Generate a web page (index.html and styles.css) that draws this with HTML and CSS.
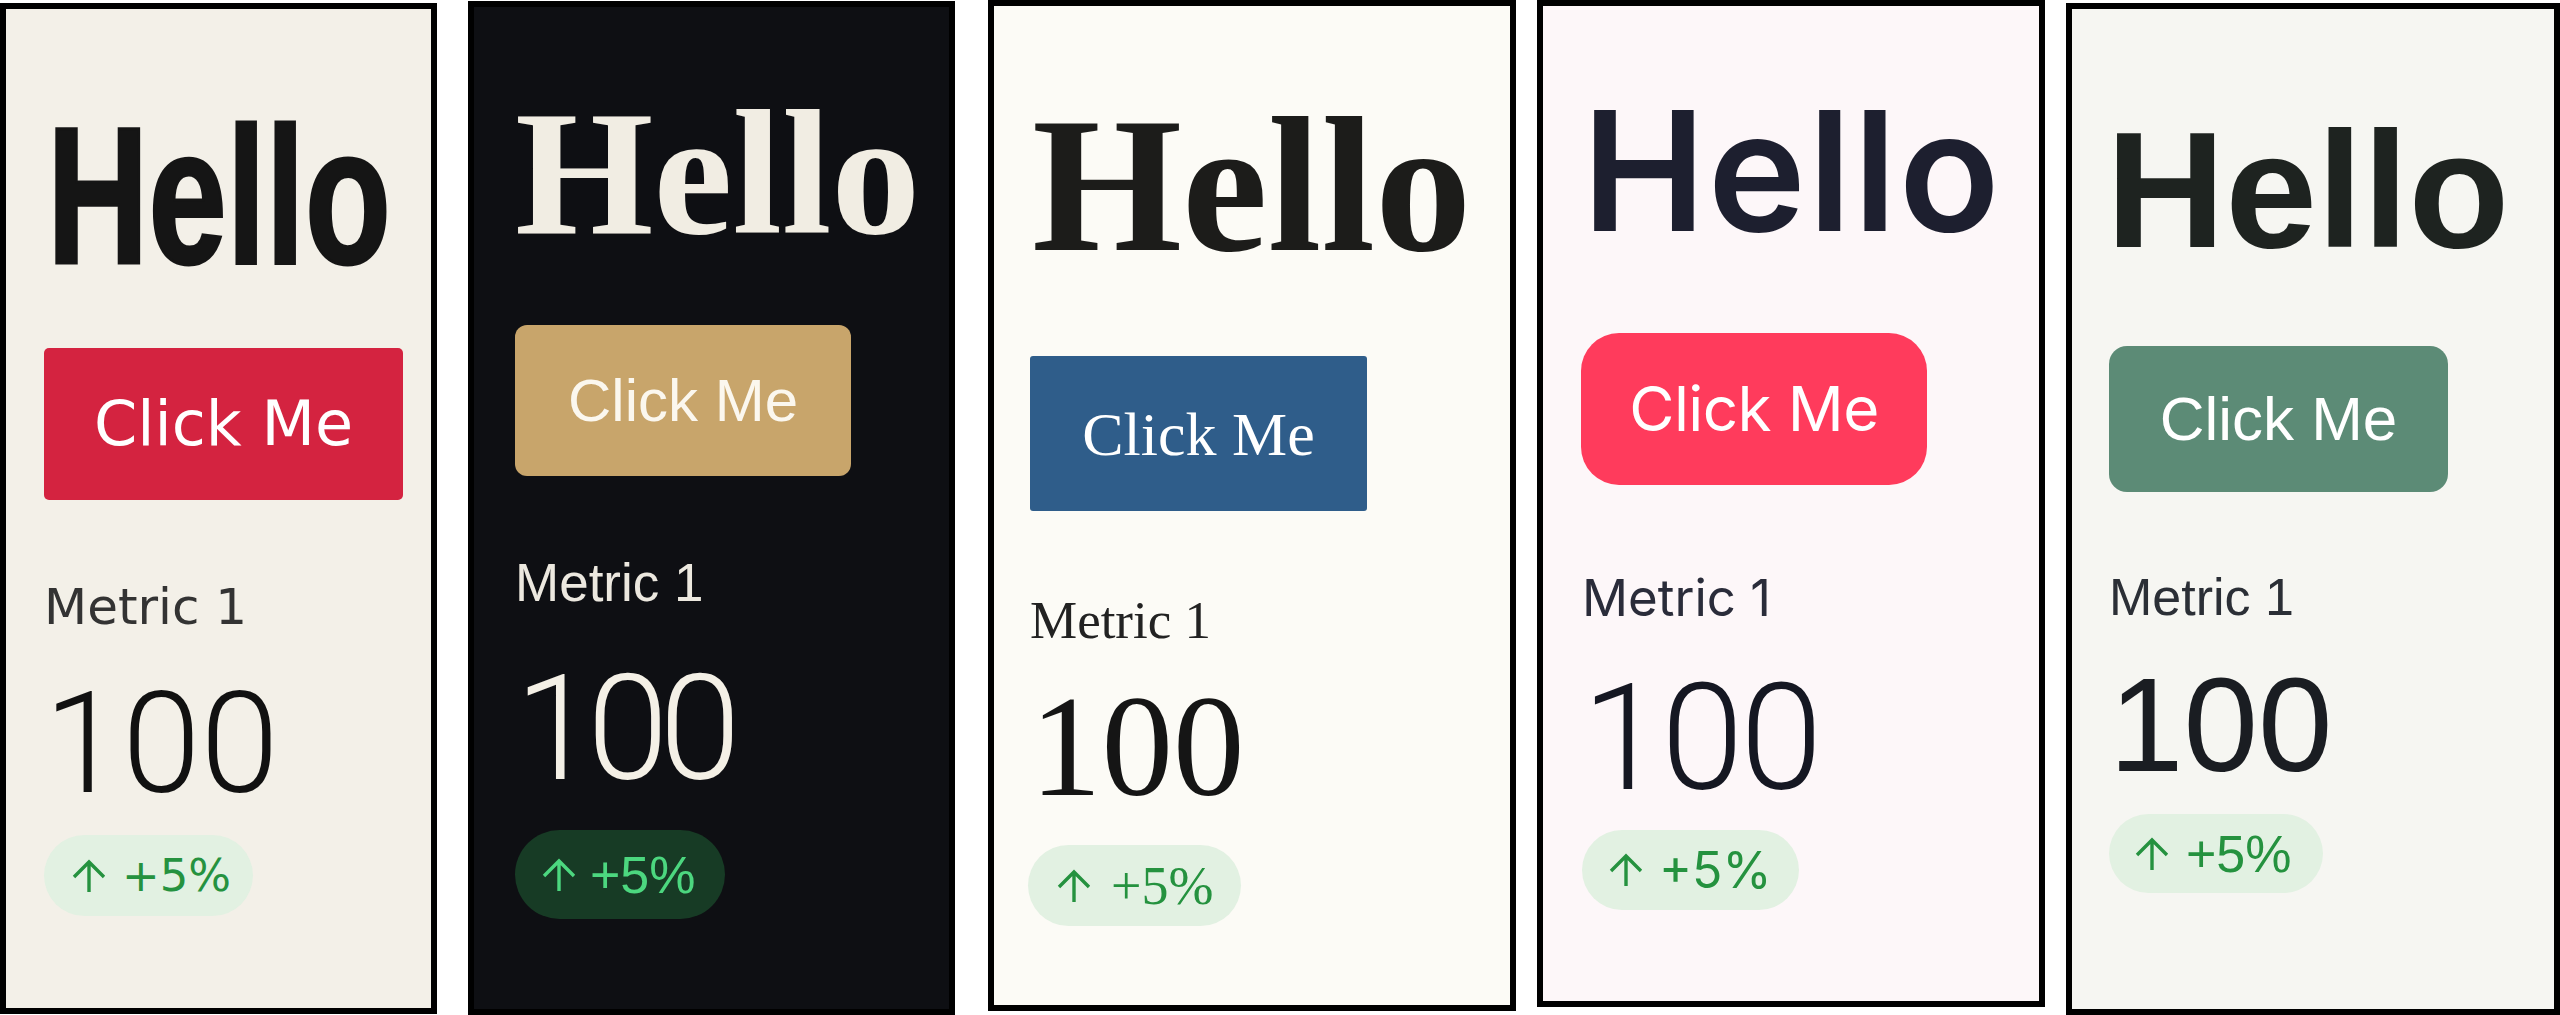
FILE: index.html
```html
<!DOCTYPE html>
<html lang="en">
<head>
<meta charset="utf-8">
<title>Theme previews</title>
<link rel="stylesheet" href="styles.css">
</head>
<body>
<div class="board">
  <section class="card c1">
    <h1 class="title">Hello</h1>
    <button class="btn">Click Me</button>
    <p class="label">Metric 1</p>
    <p class="value">100</p>
    <span class="badge"><svg class="arrow" viewBox="0 0 34 34"><path d="M17 33V3M2 18L17 3L32 18"/></svg><span>+5%</span></span>
  </section>
  <section class="card c2">
    <h1 class="title">Hello</h1>
    <button class="btn">Click Me</button>
    <p class="label">Metric 1</p>
    <p class="value">100</p>
    <span class="badge"><svg class="arrow" viewBox="0 0 34 34"><path d="M17 33V3M2 18L17 3L32 18"/></svg><span>+5%</span></span>
  </section>
  <section class="card c3">
    <h1 class="title">Hello</h1>
    <button class="btn">Click Me</button>
    <p class="label">Metric 1</p>
    <p class="value">100</p>
    <span class="badge"><svg class="arrow" viewBox="0 0 34 34"><path d="M17 33V3M2 18L17 3L32 18"/></svg><span>+5%</span></span>
  </section>
  <section class="card c4">
    <h1 class="title">Hello</h1>
    <button class="btn">Click Me</button>
    <p class="label">Metric 1</p>
    <p class="value">100</p>
    <span class="badge"><svg class="arrow" viewBox="0 0 34 34"><path d="M17 33V3M2 18L17 3L32 18"/></svg><span>+5%</span></span>
  </section>
  <section class="card c5">
    <h1 class="title">Hello</h1>
    <button class="btn">Click Me</button>
    <p class="label">Metric 1</p>
    <p class="value">100</p>
    <span class="badge"><svg class="arrow" viewBox="0 0 34 34"><path d="M17 33V3M2 18L17 3L32 18"/></svg><span>+5%</span></span>
  </section>
</div>
</body>
</html>
```

FILE: styles.css
```css
* { box-sizing: border-box; }
html, body { margin: 0; padding: 0; background: #ffffff; }
body { width: 2560px; height: 1015px; overflow: hidden; font-family: "Liberation Sans", Arial, sans-serif; }

.board { display: flex; align-items: flex-start; height: 1015px; }

.card {
  display: flex;
  flex-direction: column;
  align-items: flex-start;
  border: 6px solid #000;
  overflow: hidden;
  flex: none;
}

.title, .label, .value { margin: 0; line-height: 1; white-space: nowrap; font-weight: 400; }
.title { font-weight: 700; }

.btn {
  display: flex;
  align-items: center;
  justify-content: center;
  border: none;
  padding: 0;
  color: #fff;
  line-height: 1;
  white-space: nowrap;
  flex: none;
}

.badge {
  display: flex;
  align-items: center;
  border-radius: 999px;
  background: #e2f1e2;
  color: #25923f;
  line-height: 1;
  white-space: nowrap;
  flex: none;
}

.arrow { width: 34px; height: 34px; flex: none; }
.arrow path { fill: none; stroke: currentColor; stroke-width: 3.4; }

/* Card 1 */
.c1 { width: 437px; height: 1011px; margin-top: 3px; padding-left: 38px; background: #f3f0e8; }
.c1 .title { font-family: "Liberation Sans", Arial, sans-serif; font-size: 194px; color: #151515; -webkit-text-stroke: 3px #151515; transform: scaleX(0.725); transform-origin: left top; margin-top: 90px; margin-left: 3px; }
.c1 .btn { width: 359px; height: 152px; margin-top: 55px; background: #d42340; border-radius: 5px; font-family: "DejaVu Sans", sans-serif; font-size: 62px; }
.c1 .label { font-family: "DejaVu Sans", sans-serif; font-size: 50px; color: #333333; margin-top: 82px; }
.c1 .value { font-family: Roboto, sans-serif; font-weight: 300; font-size: 141px; color: #111111; margin-top: 41px; }
.c1 .badge { width: 209px; height: 81px; margin-top: 21px; padding-left: 28px; gap: 16px; font-family: "DejaVu Sans", sans-serif; font-size: 45px; }

/* Card 2 */
.c2 { width: 487px; height: 1014px; margin-top: 1px; margin-left: 31px; padding-left: 41px; background: #0e0f13; }
.c2 .title { font-family: "Liberation Serif", serif; font-size: 178px; color: #f1ede3; margin-top: 77px; }
.c2 .btn { width: 336px; height: 151px; margin-top: 63px; background: #c8a56b; border-radius: 12px; font-family: "Liberation Sans", Arial, sans-serif; font-size: 60px; color: #fbf7ee; }
.c2 .label { font-family: "Liberation Sans", Arial, sans-serif; font-size: 53px; color: #ece8df; margin-top: 80px; }
.c2 .value { font-family: Roboto, sans-serif; font-weight: 300; font-size: 146px; letter-spacing: -0.06em; color: #f4f0e6; margin-top: 48px; }
.c2 .badge { width: 210px; height: 89px; margin-top: 27px; padding-left: 27px; gap: 14px; background: #173b25; color: #4cd77f; font-family: "Liberation Sans", Arial, sans-serif; font-size: 52px; }

/* Card 3 */
.c3 { width: 528px; height: 1011px; margin-left: 33px; padding-left: 36px; background: #fcfbf6; }
.c3 .title { font-family: "Liberation Serif", serif; font-size: 193px; color: #1c1c1a; margin-top: 83px; margin-left: 2px; }
.c3 .btn { width: 337px; height: 155px; margin-top: 74px; background: #2f5d8a; border-radius: 3px; font-family: "Liberation Serif", serif; font-size: 62px; }
.c3 .label { font-family: "Liberation Serif", serif; font-size: 53px; color: #222222; margin-top: 83px; }
.c3 .value { font-family: "Liberation Serif", serif; font-size: 143px; color: #151515; margin-top: 29px; }
.c3 .badge { width: 213px; height: 81px; margin-top: 26px; margin-left: -2px; padding-left: 29px; gap: 20px; font-family: "Liberation Serif", serif; font-size: 54px; }

/* Card 4 */
.c4 { width: 508px; height: 1007px; margin-left: 21px; padding-left: 39px; background: #fdf7f9; }
.c4 .title { font-family: Inter, sans-serif; font-weight: 600; font-size: 166px; letter-spacing: 2px; color: #1d1f2f; margin-top: 82px; }
.c4 .btn { width: 346px; height: 152px; margin-top: 79px; margin-left: -1px; background: #ff3b5c; border-radius: 38px; font-family: Inter, sans-serif; font-weight: 400; font-size: 62px; letter-spacing: -0.01em; }
.c4 .label { font-family: Inter, sans-serif; font-size: 51px; color: #2a2c3a; margin-top: 87px; }
.c4 .value { font-family: Roboto, sans-serif; font-weight: 300; font-size: 148px; letter-spacing: -0.02em; color: #151722; margin-top: 42px; }
.c4 .badge { width: 217px; height: 80px; margin-top: 17px; padding-left: 27px; gap: 16px; font-family: Inter, sans-serif; font-size: 50px; }

/* Card 5 */
.c5 { width: 494px; height: 1012px; margin-top: 3px; margin-left: 21px; padding-left: 37px; background: #f6f6f2; }
.c5 .title { font-family: "Liberation Sans", Arial, sans-serif; font-size: 165px; color: #1e2320; margin-top: 99px; margin-left: -3px; }
.c5 .btn { width: 339px; height: 146px; margin-top: 73px; background: #5c8b76; border-radius: 18px; font-family: "Liberation Sans", Arial, sans-serif; font-size: 62px; }
.c5 .label { font-family: "Liberation Sans", Arial, sans-serif; font-size: 52px; color: #2b2f36; margin-top: 79px; }
.c5 .value { font-family: "Liberation Sans", Arial, sans-serif; font-size: 134px; color: #1a1d22; margin-top: 35px; }
.c5 .badge { width: 214px; height: 79px; margin-top: 22px; padding-left: 26px; gap: 17px; font-family: "Liberation Sans", Arial, sans-serif; font-size: 52px; }
```
